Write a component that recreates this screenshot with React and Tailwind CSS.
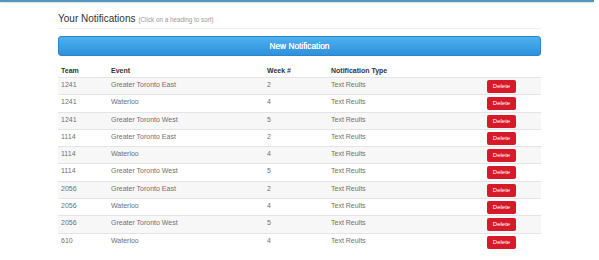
const rows = [
  ['1241', 'Greater Toronto East', '2'],
  ['1241', 'Waterloo', '4'],
  ['1241', 'Greater Toronto West', '5'],
  ['1114', 'Greater Toronto East', '2'],
  ['1114', 'Waterloo', '4'],
  ['1114', 'Greater Toronto West', '5'],
  ['2056', 'Greater Toronto East', '2'],
  ['2056', 'Waterloo', '4'],
  ['2056', 'Greater Toronto West', '5'],
  ['610', 'Waterloo', '4'],
];

export default function App() {
  return (
    <div className="w-[599px] h-[260px] bg-white overflow-hidden font-['Liberation_Sans',Arial,sans-serif]">
      <div className="h-[2px] w-[594px] bg-[#4f95b9] shadow-[0_1px_2px_rgba(0,0,0,0.15)]" />

      <div className="ml-[58px] w-[483px]">
        {/* heading */}
        <div className="pt-[11px] pb-[4px] border-b border-[#eeeeee] flex items-baseline gap-[3px]">
          <span className="text-[10px] leading-[11px] text-[#333]">Your Notifications</span>
          <span className="text-[6.3px] text-[#999]">(Click on a heading to sort)</span>
        </div>

        <button className="mt-[7px] w-full h-[20px] rounded-[3px] bg-gradient-to-b from-[#4db0ee] to-[#2f91dc] border border-[#2a86cc] text-white text-[8.3px] font-medium [text-shadow:0_0_0.4px_#fff]">
          New Notification
        </button>

        <table className="mt-[8px] w-full border-collapse text-[7px] text-[#707070]">
          <thead>
            <tr className="text-[#333] leading-[8px]">
              <th className="w-[50px] h-[13px] text-left align-bottom font-bold pl-[3px] pb-[2px]">Team</th>
              <th className="w-[156px] text-left align-bottom font-bold pl-[3px] pb-[2px]">Event</th>
              <th className="w-[64px] text-left align-bottom font-bold pl-[3px] pb-[2px]">Week #</th>
              <th className="text-left align-bottom font-bold pl-[3px] pb-[2px]">Notification Type</th>
              <th className="w-[54px]" />
            </tr>
          </thead>
          <tbody>
            {rows.map((r, i) => (
              <tr
                key={i}
                className={`h-[17.3px] border-t border-[#e4e4e4] ${i % 2 === 0 ? 'bg-[#f7f7f7]' : 'bg-white'}`}
              >
                <td className="pl-[3px] align-top pt-[2px]">{r[0]}</td>
                <td className="pl-[3px] align-top pt-[2px]">{r[1]}</td>
                <td className="pl-[3px] align-top pt-[2px]">{r[2]}</td>
                <td className="pl-[3px] align-top pt-[2px]">Text Reults</td>
                <td className="align-top pt-[2px]">
                  <span className="block w-[29px] h-[13px] rounded-[2px] bg-[#d61a2a] text-white text-[6px] leading-[13px] text-center">
                    Delete
                  </span>
                </td>
              </tr>
            ))}
          </tbody>
        </table>
      </div>
    </div>
  );
}
